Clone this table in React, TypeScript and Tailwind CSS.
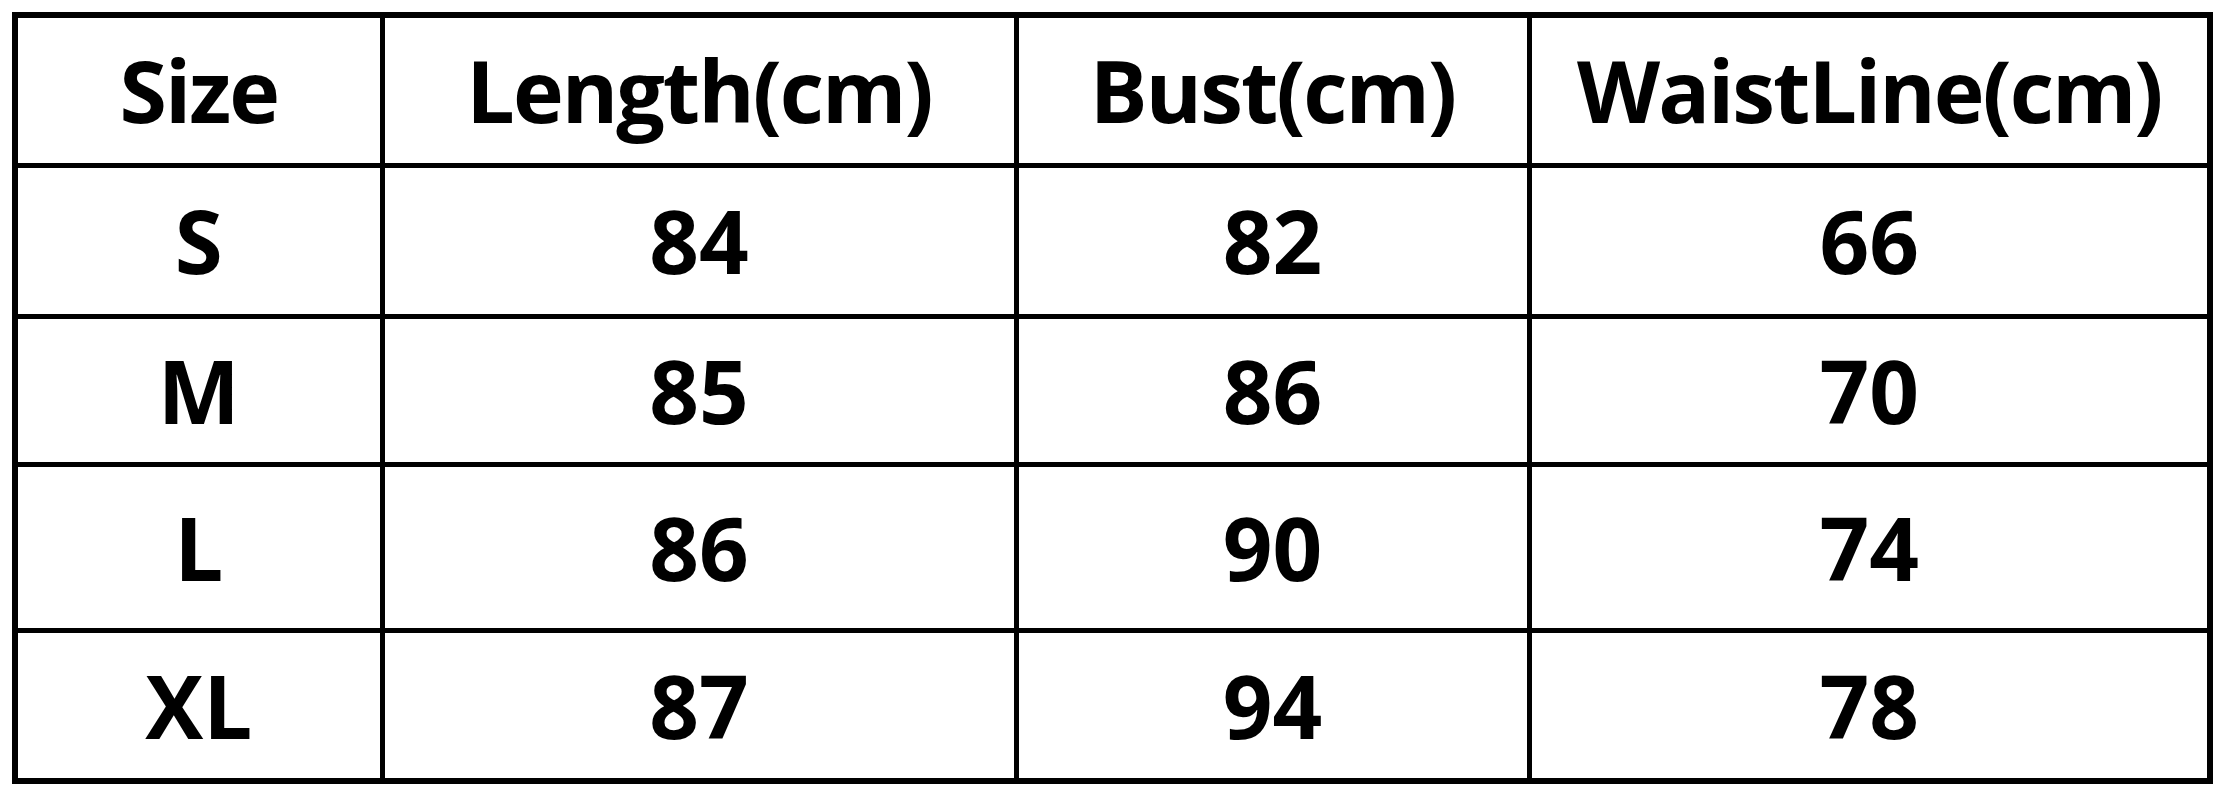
const headers = ["Size", "Length(cm)", "Bust(cm)", "WaistLine(cm)"];

const rows = [
  { size: "S", length: "84", bust: "82", waist: "66", h: "h-[151px]" },
  { size: "M", length: "85", bust: "86", waist: "70", h: "h-[148px]" },
  { size: "L", length: "86", bust: "90", waist: "74", h: "h-[166px]" },
  { size: "XL", length: "87", bust: "94", waist: "78", h: "h-[151px]" },
];

export default function App() {
  return (
    <div className="w-[2237px] h-[800px] bg-white pl-[12px] pt-[12px] font-['Open_Sans',sans-serif] text-black">
      <table className="table-fixed border-collapse border-[6px] border-black">
        <colgroup>
          <col className="w-[367px]" />
          <col className="w-[634px]" />
          <col className="w-[513px]" />
          <col className="w-[681px]" />
        </colgroup>
        <thead>
          <tr className="h-[150px]">
            {headers.map((h) => (
              <th key={h} className="border-[5px] border-black p-0 text-center align-middle text-[86px] font-bold leading-none tracking-[-2px]">
                {h}
              </th>
            ))}
          </tr>
        </thead>
        <tbody>
          {rows.map((r) => (
            <tr key={r.size} className={r.h}>
              {[r.size, r.length, r.bust, r.waist].map((v, i) => (
                <td key={i} className="border-[5px] border-black p-0 text-center align-middle text-[87px] font-bold leading-none">
                  {v}
                </td>
              ))}
            </tr>
          ))}
        </tbody>
      </table>
    </div>
  );
}
